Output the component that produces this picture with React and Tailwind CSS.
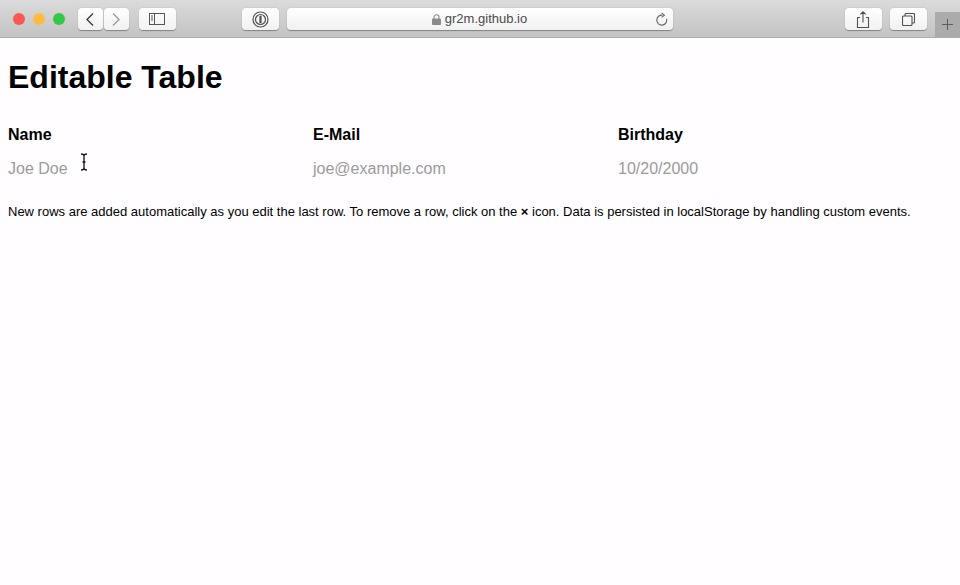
import React from "react";

const btn = "flex items-center justify-center h-[22px] bg-gradient-to-b from-white to-[#f1f1f1] rounded-[4px] shadow-[0_0.5px_1px_rgba(0,0,0,0.35)]";

// Safari toolbar on top
function Toolbar() {
  return (
    <div className="relative flex items-center h-[38px] pt-px pl-[13px] bg-gradient-to-b from-[#dcdbdc] to-[#c4c3c4] border-b border-[#aeadae]">
      <div className="flex gap-[8px]">
        <span className="w-[12px] h-[12px] rounded-full bg-[#fc5753]" />
        <span className="w-[12px] h-[12px] rounded-full bg-[#fdbc40]" />
        <span className="w-[12px] h-[12px] rounded-full bg-[#33c748]" />
      </div>
      <div className={btn + " w-[25px] ml-[13px] pr-[2px]"}>
        <svg width="10" height="15" viewBox="0 0 10 15" fill="none" stroke="#3c3c3c" strokeWidth="1.4"><path d="M8 1.5 2 7.5l6 6" /></svg>
      </div>
      <div className={btn + " w-[25px] ml-px pr-[2px]"}>
        <svg width="10" height="15" viewBox="0 0 10 15" fill="none" stroke="#9a9a9a" strokeWidth="1.4"><path d="m2 1.5 6 6-6 6" /></svg>
      </div>
      <div className={btn + " w-[37px] ml-[10px] pr-[2px]"}>
        <svg width="16" height="12" viewBox="0 0 16 12" fill="none" stroke="#555"><rect x="0.5" y="0.5" width="15" height="11" /><path d="M5.5 0.5v11M2 3h2M2 5h2M2 7h2" /></svg>
      </div>
      <div className={btn + " w-[37px] ml-[66px]"}>
        <svg width="17" height="17" viewBox="0 0 17 17" fill="none" stroke="#505050"><circle cx="8.5" cy="8.5" r="7.5" strokeWidth="1.2" /><circle cx="8.5" cy="8.5" r="5" strokeWidth="1.2" /><path d="M8.5 4.8v7.4" strokeWidth="2.2" /></svg>
      </div>
      <div className={btn + " relative w-[386px] ml-[8px] gap-[4px] pr-[1px]"}>
        <svg width="9" height="11" viewBox="0 0 9 11"><path d="M2 5V3.3a2.5 2.5 0 0 1 5 0V5" fill="none" stroke="#8a8a8a" strokeWidth="1.1" /><rect y="4.6" width="9" height="6.4" rx="1" fill="#8a8a8a" /></svg>
        <span className="font-['Liberation_Sans',sans-serif] text-[13px] text-[#4a4a4a]">gr2m.github.io</span>
        <svg className="absolute right-[5px] top-[4px]" width="14" height="15" viewBox="0 0 14 15" fill="none" stroke="#666" strokeWidth="1.1"><path d="M8.6 3.2a5 5 0 1 0 4 3.6" /><path d="M7.6 0.8 10.4 3.2 7.6 5.4" /></svg>
      </div>
      <div className={btn + " w-[37px] ml-[172px] pr-[2px]"}>
        <svg width="14" height="17" viewBox="0 0 14 17" fill="none" stroke="#505050" strokeWidth="1.1"><path d="M4 6.5H1.5v10h11v-10H10M7 11.5V1M4.3 3.4 7 0.8l2.7 2.6" /></svg>
      </div>
      <div className={btn + " w-[37px] ml-[8px]"}>
        <svg width="13" height="13" viewBox="0 0 13 13" fill="none" stroke="#505050" strokeWidth="1.1"><rect x="0.5" y="3" width="9.5" height="9.5" rx="1" /><path d="M3 3V1.5a1 1 0 0 1 1-1h7.5a1 1 0 0 1 1 1V9a1 1 0 0 1-1 1H10" /></svg>
      </div>
      {/* new tab button sits in the corner */}
      <div className="absolute right-0 bottom-0 flex items-center justify-center w-[25px] h-[25px] bg-[#acabac]">
        <svg width="11" height="11" viewBox="0 0 11 11" stroke="#5c5c5c"><path d="M5.5 0v11M0 5.5h11" /></svg>
      </div>
    </div>
  );
}

export default function App() {
  const cols = [
    { label: "Name", hint: "Joe Doe" },
    { label: "E-Mail", hint: "joe@example.com" },
    { label: "Birthday", hint: "10/20/2000" },
  ];
  return (
    <div className="w-[960px] h-[585px] overflow-hidden bg-[#fffdff] text-black font-['Liberation_Sans',Arial,sans-serif]">
      <Toolbar />
      <div className="relative px-[8px] pt-[21px]">
        <h1 className="text-[32px] leading-[37px] font-bold">Editable Table</h1>
        <div className="grid grid-cols-[305px_305px_305px] mt-[30px]">
          {cols.map((c) => (
            <div key={c.label} className="text-[16px] leading-[18px] font-bold">{c.label}</div>
          ))}
          {cols.map((c) => (
            <div key={c.hint} className="mt-[16px] text-[16px] leading-[18px] text-[#9b9b9b]">{c.hint}</div>
          ))}
        </div>
        <p className="mt-[26px] text-[13px] leading-[15px]">
          New rows are added automatically as you edit the last row. To remove a row, click on the <b>×</b> icon. Data is persisted in localStorage by handling custom events.
        </p>
        {/* text cursor over the first row */}
        <svg className="absolute left-[80px] top-[115px]" width="8" height="18" viewBox="0 0 8 18" fill="none" stroke="#111" strokeWidth="1.3"><path d="M1 1c1.5 0 3 .5 3 2v12c0 1.5-1.500 2-3 2M7 1c-1.500 0-3 .5-3 2v12c0 1.500 1.500 2 3 2M2.500 9h3" /></svg>
      </div>
    </div>
  );
}
